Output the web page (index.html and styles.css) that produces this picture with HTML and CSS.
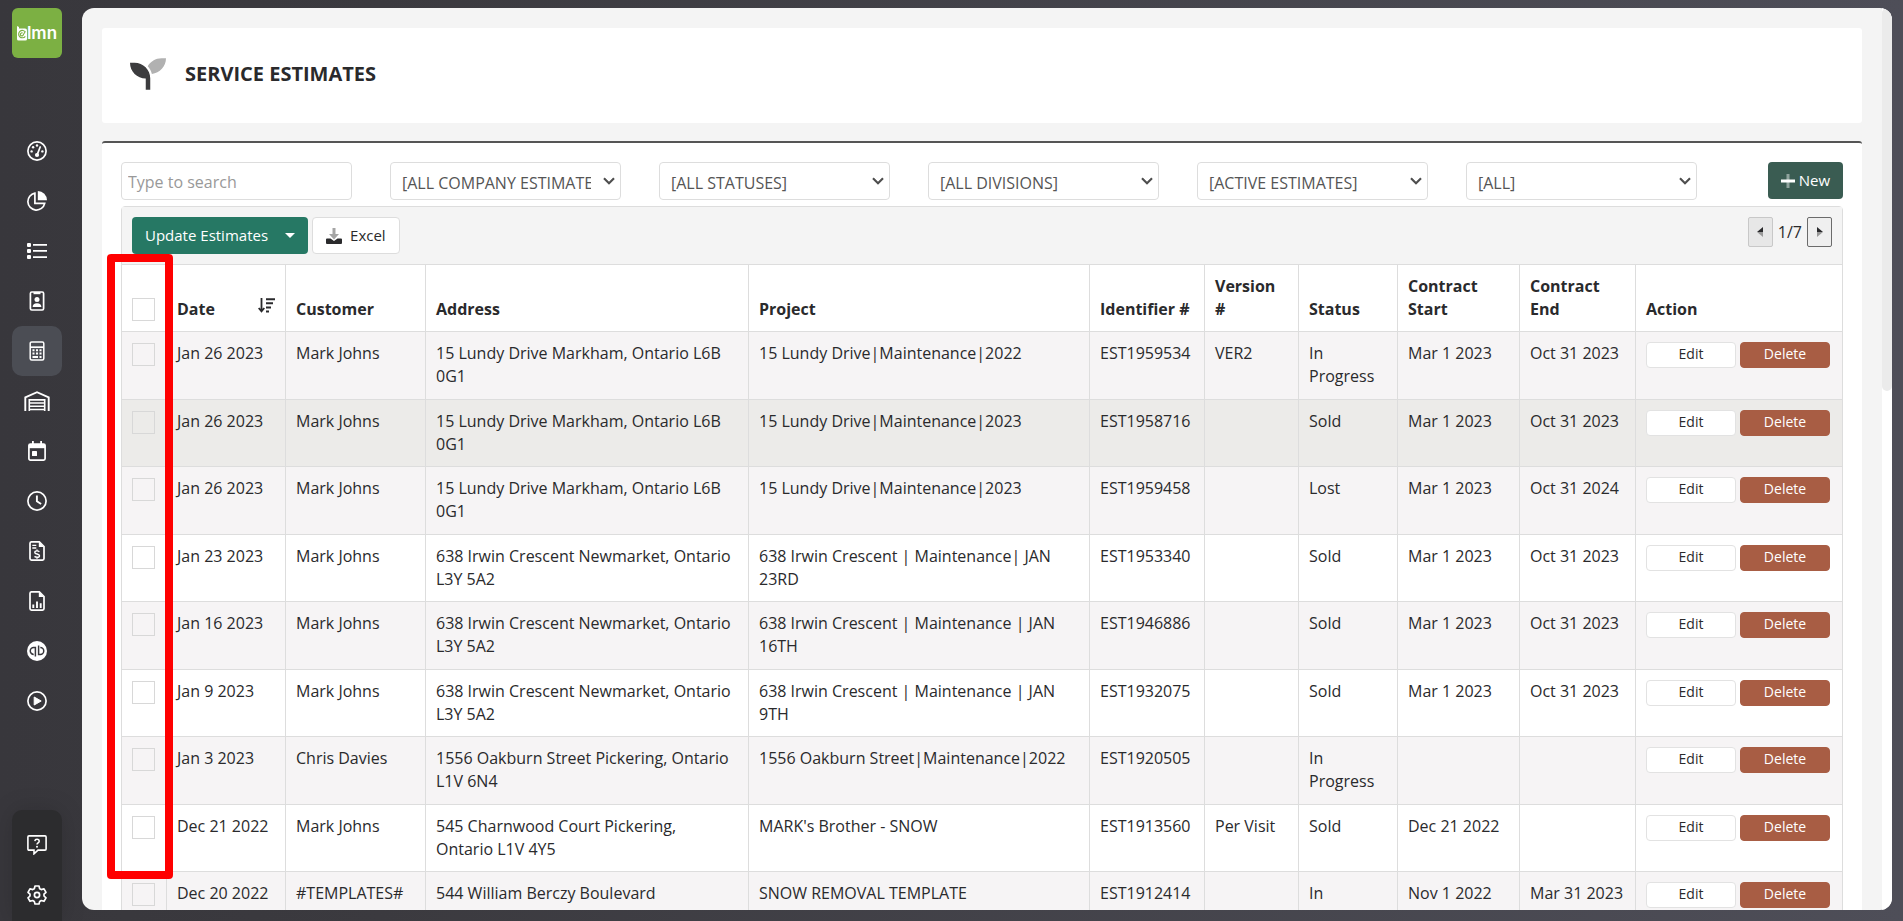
FILE: index.html
```html
<!DOCTYPE html>
<html lang="en">
<head>
  <meta charset="UTF-8">
  <meta name="viewport" content="width=device-width, initial-scale=1.0">
  <title>Service Estimates</title>
  <link rel="stylesheet" href="styles.css">
</head>
<body>

<!-- Sidebar -->
<nav class="sidebar" aria-label="Main">
  <a href="#" class="logo">
    <svg width="10" height="15" viewBox="0 0 10 15" aria-hidden="true">
      <path d="M0 0l2 1v1.500h6q2 0 2 2V13q0 1.500-1.500 1.500H1.500Q0 14.500 0 13z" fill="#fff"/>
      <path d="M8.300 10.300A3.700 3.700 0 1 1 8.500 6.200M8.400 5.300L6.300 8.800A1.500 1.500 0 1 1 5.600 7.100" fill="none" stroke="#7cb043" stroke-width="1.100"/>
    </svg>
    <span>lmn</span>
  </a>
  <div class="nav-list">
    <a href="#" class="nav-item" aria-label="Dashboard">
      <svg width="20" height="20" viewBox="0 0 20 20" fill="none" stroke="#fff" aria-hidden="true">
        <circle cx="10" cy="10" r="9.1" stroke-width="1.7"/>
        <path d="M10.2 13.6l3-7.6" stroke-width="1.7" stroke-linecap="round"/>
        <g fill="#fff" stroke="none"><circle cx="10" cy="14" r="2.1"/><circle cx="4.6" cy="10.4" r="1.2"/><circle cx="6.1" cy="6.2" r="1.2"/><circle cx="10" cy="4.5" r="1.2"/><circle cx="15.4" cy="10.4" r="1.2"/></g>
      </svg>
    </a>
    <a href="#" class="nav-item" aria-label="Reports">
      <svg width="20" height="20" viewBox="0 0 20 20" fill="none" stroke="#fff" aria-hidden="true">
        <path d="M7.9 2.2A8.5 8.5 0 1 0 17.7 12.4H7.9z" stroke-width="1.7"/>
        <path d="M10.8 0A9.3 9.3 0 0 1 20 9.3h-9.2z" fill="#fff" stroke="none"/>
      </svg>
    </a>
    <a href="#" class="nav-item" aria-label="Lists">
      <svg width="20" height="20" viewBox="0 0 20 20" fill="#fff" aria-hidden="true">
        <rect x="0" y="2" width="4" height="4" rx="1"/><rect x="0" y="8" width="4" height="4" rx="1"/><rect x="0" y="14" width="4" height="4" rx="1"/>
        <path d="M6 3h14v1.8H6zM6 9h14v1.8H6zM6 15.2h14V17H6z"/>
      </svg>
    </a>
    <a href="#" class="nav-item" aria-label="Contacts">
      <svg width="16" height="20" viewBox="0 0 16 20" fill="none" stroke="#fff" aria-hidden="true">
        <rect x="1.4" y="1" width="13.2" height="18" rx="1.4" stroke-width="1.7"/>
        <path d="M4.5 1h7v2.2h-7z" fill="#fff" stroke="none"/>
        <circle cx="8" cy="8.6" r="2.5" fill="#fff" stroke="none"/>
        <path d="M3.6 16c0-2.400 1.600-3.800 4.400-3.800s4.400 1.400 4.400 3.800z" fill="#fff" stroke="none"/>
      </svg>
    </a>
    <a href="#" class="nav-item active" aria-label="Estimates">
      <svg width="16" height="20" viewBox="0 0 16 20" fill="none" stroke="#fff" aria-hidden="true">
        <rect x="1.200" y=".9" width="13.600" height="18.200" rx="1.500" stroke-width="1.500"/>
        <path d="M1 6.200h14" stroke-width="1.700"/>
        <path d="M3.500 9.300h2m1.500 0h2m1.500 0h2m-9 3.300h2m1.500 0h2m1.500 0h2m-9 3.400h5.500m1.500 0h2" stroke-width="2"/>
      </svg>
    </a>
    <a href="#" class="nav-item" aria-label="Warehouse">
      <svg width="26" height="20" viewBox="0 0 26 20" fill="none" stroke="#fff" aria-hidden="true">
        <path d="M1.300 20V6.300L13 1.200l11.700 5.100V20" stroke-width="1.900"/>
        <path d="M5.300 20V8.900h15.400V20M5.300 12h15.400M5.300 15.200h15.400M5.300 18.500h15.400" stroke-width="1.600"/>
      </svg>
    </a>
    <a href="#" class="nav-item" aria-label="Schedule">
      <svg width="18" height="20" viewBox="0 0 18 20" fill="none" stroke="#fff" aria-hidden="true">
        <rect x=".9" y="3" width="16.200" height="16.100" rx="1.500" stroke-width="1.700"/>
        <path d="M1 3h16v4.200H1z" fill="#fff" stroke="none"/>
        <path d="M4.900 0v4M13.100 0v4" stroke-width="1.800"/>
        <rect x="4" y="10" width="5" height="5" rx=".6" fill="#fff" stroke="none"/>
      </svg>
    </a>
    <a href="#" class="nav-item" aria-label="Timesheets">
      <svg width="20" height="20" viewBox="0 0 20 20" fill="none" stroke="#fff" aria-hidden="true">
        <circle cx="10" cy="10" r="9.100" stroke-width="1.700"/>
        <path d="M9.900 4.500v5.800l4.200 2.700" stroke-width="1.900"/>
      </svg>
    </a>
    <a href="#" class="nav-item" aria-label="Invoices">
      <svg width="16" height="20" viewBox="0 0 16 20" fill="none" stroke="#fff" aria-hidden="true">
        <path d="M2.300.9h8L15 5.500v12.100a1.500 1.500 0 0 1-1.500 1.500h-11A1.500 1.500 0 0 1 1 17.600V2.400A1.500 1.500 0 0 1 2.300.9z" stroke-width="1.700"/>
        <path d="M9.800 1v5H15z" fill="#fff" stroke="none"/>
        <path d="M3.300 4.300h4M3.300 7h4" stroke-width="1.300"/>
        <path d="M10.400 10.700c-.7-.6-1.600-.8-2.400-.8-1.300 0-2.200.6-2.200 1.500 0 2.200 4.700 1 4.700 3.300 0 1-1 1.600-2.400 1.600-1 0-1.900-.3-2.600-.9M8 8.600v1.300m0 6.400v1.400" stroke-width="1.400"/>
      </svg>
    </a>
    <a href="#" class="nav-item" aria-label="Analysis">
      <svg width="16" height="20" viewBox="0 0 16 20" fill="none" stroke="#fff" aria-hidden="true">
        <path d="M2.300.9h8L15 5.500v12.100a1.500 1.500 0 0 1-1.500 1.500h-11A1.500 1.500 0 0 1 1 17.600V2.400A1.500 1.500 0 0 1 2.300.9z" stroke-width="1.700"/>
        <path d="M9.800 1v5H15z" fill="#fff" stroke="none"/>
        <path d="M4.300 17v-3.500M8 17v-6.500M11.700 17v-4.800" stroke-width="1.900"/>
      </svg>
    </a>
    <a href="#" class="nav-item" aria-label="QuickBooks">
      <svg width="20" height="20" viewBox="0 0 20 20" fill="none" stroke="#38373c" aria-hidden="true">
        <circle cx="10" cy="10" r="10" fill="#fff" stroke="none"/>
        <path d="M8.400 15.600V6.500H6.700a3.400 3.400 0 0 0 0 6.900M11.600 4.400v9h1.700a3.400 3.400 0 0 0 0-6.900" stroke-width="1.500"/>
      </svg>
    </a>
    <a href="#" class="nav-item" aria-label="Videos">
      <svg width="20" height="20" viewBox="0 0 20 20" fill="none" stroke="#fff" aria-hidden="true">
        <circle cx="10" cy="10" r="9.100" stroke-width="1.700"/>
        <path d="M7.200 6l7 4-7 4z" fill="#fff"/>
      </svg>
    </a>
  </div>
  <div class="nav-bottom">
    <a href="#" class="nav-item" aria-label="Help">
      <svg width="20" height="20" viewBox="0 0 20 20" fill="none" stroke="#fff" aria-hidden="true">
        <path d="M2 .9h16q1.100 0 1.100 1.100v12q0 1.100-1.100 1.100h-7L7 18.800v-3.700H2Q.9 15.100.9 14V2Q.9.900 2 .9z" stroke-width="1.600"/>
        <path d="M7.800 6.100c.2-1.200 1-1.800 2.200-1.800 1.300 0 2.200.7 2.200 1.900 0 1.700-2.200 1.700-2.200 3.400" stroke-width="1.500"/>
        <circle cx="10" cy="11.800" r="1" fill="#fff" stroke="none"/>
      </svg>
    </a>
    <a href="#" class="nav-item" aria-label="Settings">
      <svg width="20" height="20" viewBox="0 0 20 20" fill="none" stroke="#fff" stroke-linejoin="round" aria-hidden="true">
        <path d="M8 1h4l.7 2.700 1.600.9 2.700-.8 2 3.500-2 1.900v1.800l2 1.900-2 3.400-2.700-.8-1.600.9L12 19H8l-.7-2.600-1.600-.9-2.700.8-2-3.400 2-1.900V9.200L1 7.300l2-3.500 2.700.8 1.600-.9z" stroke-width="1.700"/>
        <circle cx="10" cy="10" r="2.600" stroke-width="1.700"/>
      </svg>
    </a>
  </div>
</nav>

<!-- Main area -->
<main class="page">
  <div class="content">

    <header class="page-header">
      <svg width="36" height="36" viewBox="0 0 512 512" aria-hidden="true">
        <path fill="#3c3c3e" d="M64 96H0c0 123.700 100.300 224 224 224v160h64V320C288 196.300 187.700 96 64 96z"/>
        <path fill="#b1b1b1" d="M448 32c-84.200 0-157.400 46.500-195.700 115.200 27.700 30.200 48.200 66.900 59 107.600C424 243.100 512 147.900 512 32z"/>
      </svg>
      <h1>SERVICE ESTIMATES</h1>
    </header>

    <section class="panel">
      <!-- Filters -->
      <form class="filters">
        <input type="text" class="field search" placeholder="Type to search" aria-label="Search">
        <select class="field" aria-label="Company"><option>[ALL COMPANY ESTIMATES]</option></select>
        <select class="field" aria-label="Status"><option>[ALL STATUSES]</option></select>
        <select class="field" aria-label="Division"><option>[ALL DIVISIONS]</option></select>
        <select class="field" aria-label="Active"><option>[ACTIVE ESTIMATES]</option></select>
        <select class="field" aria-label="Other"><option>[ALL]</option></select>
        <button type="button" class="btn btn-new">
          <svg width="14" height="14" viewBox="0 0 14 14" aria-hidden="true"><path fill="#8fa39d" d="M5.500 0h3v14h-3z"/><path fill="#fff" d="M0 5.500h14v3H0z"/></svg>
          New
        </button>
      </form>

      <!-- Estimates grid -->
      <div class="grid">
        <div class="toolbar">
          <button type="button" class="btn btn-update">Update Estimates <span class="caret"></span></button>
          <button type="button" class="btn btn-excel">
            <svg width="16" height="16" viewBox="0 0 16 16" aria-hidden="true"><path fill="#2a2a2c" d="M1 10.500h3.500L8 13l3.500-2.500H15q1 0 1 1V15q0 1-1 1H1q-1 0-1-1v-3.500q0-1 1-1z"/><path fill="#a5a5a5" d="M6.500 0h3v6H13l-5 5.500L3 6h3.500z"/></svg>
            Excel
          </button>
          <div class="pager">
            <button type="button" class="pager-btn" disabled aria-label="Previous page"><svg width="6" height="10" viewBox="0 0 6 10" aria-hidden="true"><path fill="#2a2a2c" d="M6 0v5H0z"/><path fill="#999" d="M6 10V5H0z"/></svg></button>
            <span>1/7</span>
            <button type="button" class="pager-btn" aria-label="Next page"><svg width="6" height="10" viewBox="0 0 6 10" aria-hidden="true"><path fill="#2a2a2c" d="M0 0v5h6z"/><path fill="#999" d="M0 10V5h6z"/></svg></button>
          </div>
        </div>

        <table class="estimates">
          <colgroup>
            <col class="c-check"><col class="c-date"><col class="c-customer"><col class="c-address"><col class="c-project"><col class="c-id"><col class="c-version"><col class="c-status"><col class="c-start"><col class="c-end"><col class="c-action">
          </colgroup>
          <thead>
            <tr>
              <th><input type="checkbox" class="check" aria-label="Select all"></th>
              <th>
                <div class="sortable">Date
                  <svg width="17" height="15" viewBox="0 0 17 15" fill="none" stroke="#2a2a2c" aria-hidden="true"><path d="M3.500 0v12.500M.7 10l2.800 3.300L6.300 10" stroke-width="1.800"/><path d="M8 1.200h9M8 5.300h7M8 9.400h5M8 13.500h3" stroke-width="2"/></svg>
                </div>
              </th>
              <th>Customer</th>
              <th>Address</th>
              <th>Project</th>
              <th>Identifier #</th>
              <th>Version #</th>
              <th>Status</th>
              <th>Contract Start</th>
              <th>Contract End</th>
              <th>Action</th>
            </tr>
          </thead>
          <tbody id="rows"></tbody>
        </table>
      </div>
    </section>
  </div>

  <div class="scrollbar"><div class="thumb"></div></div>
</main>

<!-- Highlight around the tick box column -->
<div class="highlight"></div>

<script src="script.js"></script>
</body>
</html>
```

FILE: styles.css
```css
/* Basic Styles */
* {
  box-sizing: border-box;
}
body {
  margin: 0;
  height: 100vh;
  display: flex;
  overflow: hidden;
  background: linear-gradient(90deg, #38373c 0%, #3b3a3f 20%, #4e4e58 100%);
  color: #2a2a2c;
  font-family: "Open Sans", "Noto Sans", sans-serif;
  font-size: 16px;
  line-height: 23px;
}
button,
input,
select {
  font: inherit;
  color: inherit;
}

/* Sidebar */
.sidebar {
  width: 82px;
  flex: none;
  padding: 8px 20px 0 12px;
  display: flex;
  flex-direction: column;
}
.logo {
  height: 50px;
  display: flex;
  align-items: center;
  justify-content: center;
  border-radius: 6px;
  background: #7cb043;
  color: #fff;
  font-family: Inter, sans-serif;
  font-size: 17px;
  font-weight: 600;
  text-decoration: none;
}
.nav-list {
  margin-top: 68px;
}
.nav-item {
  height: 50px;
  display: flex;
  align-items: center;
  justify-content: center;
  border-radius: 10px;
}
.nav-item.active {
  background: #4b4d54;
}
.nav-bottom {
  margin-top: auto;
  padding: 10px 0 1px;
  border-radius: 10px 10px 0 0;
  background: #2c2c2e;
  box-shadow: 0 0 24px rgba(0, 0, 0, 0.15);
}

/* Main area */
.page {
  flex: 1;
  min-width: 0;
  margin: 8px 11px 11px 0;
  display: flex;
  overflow: hidden;
  border-radius: 12px;
  background: #f4f4f4;
}
.content {
  flex: 1;
  min-width: 0;
  padding: 20px;
}
.scrollbar {
  width: 10px;
  background: #fff;
}
.thumb {
  height: 383px;
  border-radius: 5px;
  background: #ebebeb;
}
.page-header {
  height: 95px;
  display: flex;
  align-items: center;
  gap: 19px;
  padding: 0 28px 4px;
  border-radius: 3px;
  background: #fff;
}
h1 {
  margin: 0;
  font-size: 20px;
  font-weight: 700;
}
.panel {
  margin-top: 18px;
  padding: 19px;
  border-top: 2px solid #555;
  border-radius: 3px;
  background: #fff;
}

/* Filters */
.filters {
  display: grid;
  grid-template-columns: repeat(6, 1fr) auto;
  gap: 38px;
}
.field {
  appearance: none;
  width: 100%;
  height: 38px;
  padding: 4px 29px 0 11px;
  border: 1px solid #ddd;
  border-radius: 4px;
  background: #fff;
  color: #555;
}
select.field {
  background: #fff url("data:image/svg+xml,%3Csvg xmlns='http://www.w3.org/2000/svg' width='12' height='8' fill='none' stroke='%23505050' stroke-width='2.2'%3E%3Cpath d='M1 1.200l5 5 5-5'/%3E%3C/svg%3E") no-repeat right 5px center;
}
.search {
  padding: 2px 6px 0;
}
.search::placeholder {
  color: #999;
}
.btn {
  height: 37px;
  display: flex;
  align-items: center;
  border: 0;
  border-radius: 4px;
  font-size: 15px;
  cursor: pointer;
}
.btn-new {
  width: 75px;
  justify-content: center;
  gap: 4px;
  margin-left: 33px;
  padding: 0;
  background: #3a5c52;
  color: #fff;
}

/* Grid toolbar */
.grid {
  margin-top: 6px;
  border: 1px solid #ddd;
  border-radius: 4px 4px 0 0;
}
.toolbar {
  height: 57px;
  display: flex;
  align-items: flex-start;
  gap: 4px;
  padding: 10px;
  background: #f4f4f4;
}
.btn-update {
  gap: 17px;
  padding: 0 13px;
  background: #267864;
  color: #fff;
}
.caret {
  border: 5px solid transparent;
  border-top-color: #fff;
  border-bottom: 0;
}
.btn-excel {
  gap: 8px;
  padding: 0 13px;
  border: 1px solid #ddd;
  background: #fff;
}
.pager {
  display: flex;
  align-items: center;
  gap: 5px;
  margin-left: auto;
}
.pager-btn {
  width: 25px;
  height: 30px;
  display: flex;
  align-items: center;
  justify-content: center;
  padding: 0;
  border: 1px solid #6b6b6b;
  border-radius: 2px;
  background: #efefef;
}
.pager-btn:disabled {
  border-color: #c8c8c8;
  background: #e7e7e7;
}

/* Estimates table */
.estimates {
  width: 100%;
  table-layout: fixed;
  border-collapse: separate;
  border-spacing: 0;
}
.c-check { width: 45px; }
.c-date { width: 119px; }
.c-customer { width: 140px; }
.c-address { width: 323px; }
.c-project { width: 341px; }
.c-id { width: 115px; }
.c-version { width: 94px; }
.c-status { width: 99px; }
.c-start { width: 122px; }
.c-end { width: 116px; }
.c-action { width: 206px; }
.estimates th,
.estimates td {
  padding: 10px;
  border-top: 1px solid #ddd;
  border-right: 1px solid #ddd;
  text-align: left;
  vertical-align: top;
}
.estimates th:last-child,
.estimates td:last-child {
  border-right: 0;
}
.estimates th {
  font-weight: 700;
  vertical-align: bottom;
}
.estimates td:nth-child(4) {
  padding-right: 14px;
}
.estimates tbody tr:nth-child(odd) td {
  padding-bottom: 11px;
  background: #f6f4f5;
}
.estimates tbody tr.hovered td {
  background: #ecebe9;
}
.sortable {
  display: flex;
  justify-content: space-between;
}
.check {
  appearance: none;
  display: block;
  width: 23px;
  height: 23px;
  margin: 0;
  border: 1px solid #d8d8d8;
}
td .check {
  margin-top: 1px;
}
.actions {
  display: flex;
  gap: 4px;
}
.btn-small {
  width: 90px;
  height: 26px;
  padding: 0 0 2px;
  border: 1px solid #e2e2e2;
  border-radius: 4px;
  background: #fff;
  font-size: 14px;
  line-height: 20px;
  cursor: pointer;
}
.btn-delete {
  border-color: #a85d44;
  background: #a85d44;
  color: #fff;
}

/* Highlight box */
.highlight {
  position: absolute;
  left: 107px;
  top: 254px;
  width: 66px;
  height: 625px;
  border: 8px solid #f00;
  border-radius: 4px;
  pointer-events: none;
}
```

FILE: script.js
```js
const estimates = [
  ["Jan 26 2023", "Mark Johns", "15 Lundy Drive Markham, Ontario L6B 0G1", "15 Lundy Drive|Maintenance|2022", "EST1959534", "VER2", "In Progress", "Mar 1 2023", "Oct 31 2023"],
  ["Jan 26 2023", "Mark Johns", "15 Lundy Drive Markham, Ontario L6B 0G1", "15 Lundy Drive|Maintenance|2023", "EST1958716", "", "Sold", "Mar 1 2023", "Oct 31 2023"],
  ["Jan 26 2023", "Mark Johns", "15 Lundy Drive Markham, Ontario L6B 0G1", "15 Lundy Drive|Maintenance|2023", "EST1959458", "", "Lost", "Mar 1 2023", "Oct 31 2024"],
  ["Jan 23 2023", "Mark Johns", "638 Irwin Crescent Newmarket, Ontario L3Y 5A2", "638 Irwin Crescent | Maintenance| JAN 23RD", "EST1953340", "", "Sold", "Mar 1 2023", "Oct 31 2023"],
  ["Jan 16 2023", "Mark Johns", "638 Irwin Crescent Newmarket, Ontario L3Y 5A2", "638 Irwin Crescent | Maintenance | JAN 16TH", "EST1946886", "", "Sold", "Mar 1 2023", "Oct 31 2023"],
  ["Jan 9 2023", "Mark Johns", "638 Irwin Crescent Newmarket, Ontario L3Y 5A2", "638 Irwin Crescent | Maintenance | JAN 9TH", "EST1932075", "", "Sold", "Mar 1 2023", "Oct 31 2023"],
  ["Jan 3 2023", "Chris Davies", "1556 Oakburn Street Pickering, Ontario L1V 6N4", "1556 Oakburn Street|Maintenance|2022", "EST1920505", "", "In Progress", "", ""],
  ["Dec 21 2022", "Mark Johns", "545 Charnwood Court Pickering, Ontario L1V 4Y5", "MARK's Brother - SNOW", "EST1913560", "Per Visit", "Sold", "Dec 21 2022", ""],
  ["Dec 20 2022", "#TEMPLATES#", "544 William Berczy Boulevard Markham, Ontario", "SNOW REMOVAL TEMPLATE", "EST1912414", "", "In Progress", "Nov 1 2022", "Mar 31 2023"]
];

const hoveredRow = 1;
const rows = document.getElementById("rows");

estimates.forEach((estimate, index) => {
  const tr = document.createElement("tr");
  if (index === hoveredRow) {
    tr.className = "hovered";
  }
  tr.innerHTML =
    `<td><input type="checkbox" class="check" aria-label="Select ${estimate[4]}"></td>` +
    estimate.map(value => `<td>${value}</td>`).join("") +
    `<td><div class="actions">
      <button type="button" class="btn-small">Edit</button>
      <button type="button" class="btn-small btn-delete">Delete</button>
    </div></td>`;
  rows.appendChild(tr);
});
```
